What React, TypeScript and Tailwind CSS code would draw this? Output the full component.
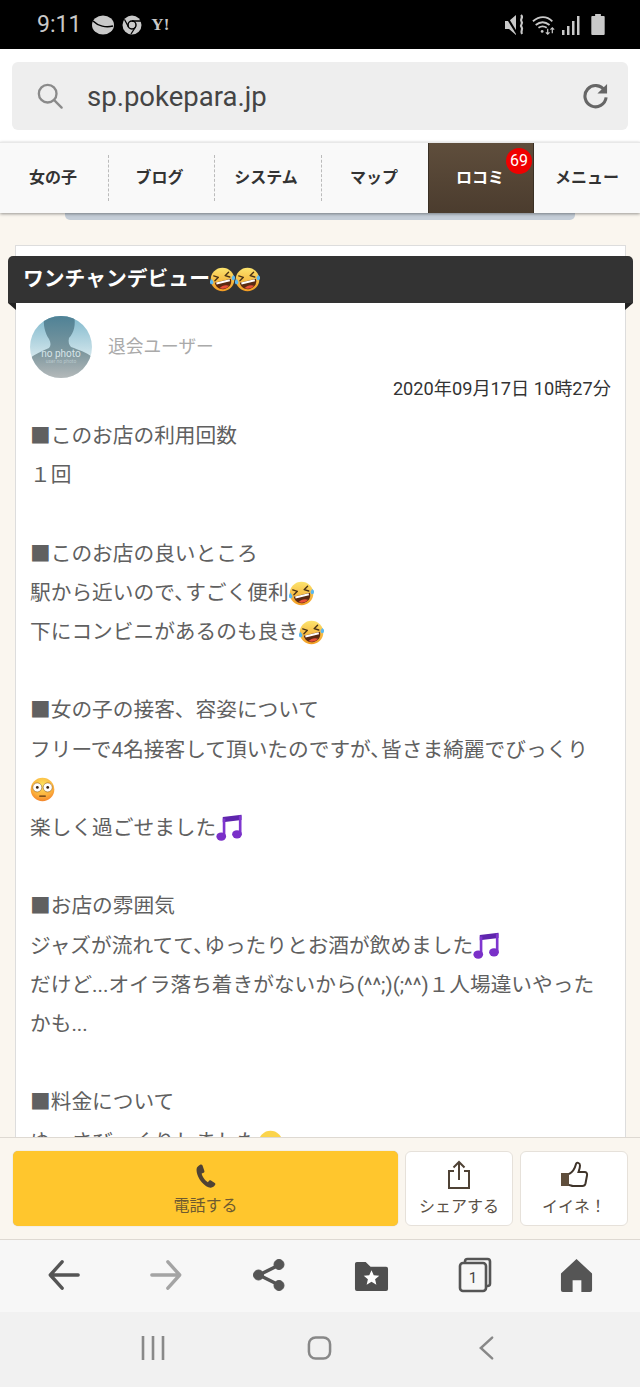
const Rofl = ({ id }: { id: string }) => (
  <svg className="inline-block size-[25px] align-[-6px]" viewBox="0 0 36 36">
    <defs>
      <linearGradient id={id} x1="0" y1="0" x2="0" y2="1">
        <stop offset="0" stopColor="#fce46e" />
        <stop offset="1" stopColor="#f39c22" />
      </linearGradient>
    </defs>
    <circle cx="18" cy="18" r="17" fill={`url(#${id})`} />
    <g transform="rotate(-14 18 18)">
      <path d="M7 10l6 3.500-6 3.500M29 10l-6 3.500 6 3.500" fill="none" stroke="#4a3216" strokeWidth="2" strokeLinecap="round" strokeLinejoin="round" />
      <path d="M6 20h24c0 8-5.500 12-12 12S6 28 6 20z" fill="#5a2a12" />
      <path d="M8 20h20v3H8z" fill="#fff" />
      <path d="M11 29c4-3 10-3 14 0-4 3-10 3-14 0z" fill="#e8503a" />
    </g>
    <path d="M0 20c-.5 3 .5 5 2.500 5s3-2 2-4.500L2 17zM36 14c.5 3-.5 5-2.500 5s-3-2-2-4.500l2-3z" fill="#5cb8f0" />
  </svg>
);

const Flushed = () => (
  <svg className="inline-block size-[25px] align-[-6px]" viewBox="0 0 36 36">
    <defs>
      <radialGradient id="flush" cx="0.5" cy="0.3" r="0.75">
        <stop offset="0" stopColor="#fde25c" />
        <stop offset="0.65" stopColor="#fbae3c" />
        <stop offset="1" stopColor="#f27c28" />
      </radialGradient>
    </defs>
    <circle cx="18" cy="18" r="17" fill="url(#flush)" />
    <circle cx="10.500" cy="15" r="6.500" fill="#fff" stroke="#7a4a14" strokeWidth="0.7" />
    <circle cx="25.500" cy="15" r="6.500" fill="#fff" stroke="#7a4a14" strokeWidth="0.7" />
    <circle cx="10.500" cy="15" r="2" fill="#3a2410" />
    <circle cx="25.500" cy="15" r="2" fill="#3a2410" />
    <path d="M14 27.500h8" stroke="#5a3412" strokeWidth="2" strokeLinecap="round" />
  </svg>
);

const Smile = () => (
  <svg className="inline-block size-[25px] align-[-6px]" viewBox="0 0 36 36">
    <circle cx="18" cy="18" r="17" fill="#fbd44c" />
    <path d="M6 14c2-3 6-3 8 0M22 14c2-3 6-3 8 0" fill="none" stroke="#6b4a14" strokeWidth="2" strokeLinecap="round" />
    <path d="M10 25c4 4 12 4 16 0" fill="none" stroke="#6b4a14" strokeWidth="2" strokeLinecap="round" />
  </svg>
);

const Notes = () => (
  <svg className="inline-block h-[27px] w-[27px] align-[-6px]" viewBox="0 0 36 36">
    <path d="M9 4l25-3v7L9 11z" fill="#5f25ad" />
    <path d="M9 6h3.500v24H9zM30.500 2H34v25h-3.500z" fill="#7f36cf" />
    <ellipse cx="7" cy="30" rx="6.500" ry="5.500" fill="#7a30c8" />
    <ellipse cx="28" cy="27" rx="6.500" ry="5.500" fill="#7a30c8" />
  </svg>
);

const StatusIcons = () => (
  <div className="flex items-center">
    <svg className="h-[22px] w-[20px]" viewBox="0 0 20 22" fill="#c9c9c9">
      <path d="M0 7h4l7-6v20l-7-6H0z" />
      <path d="M0 2l1.500-1.500 11 18L11 20z" fill="#000" />
      <path d="M16 1c3 2.500-1.500 4 .5 6.500s-2 3 0 5.500-1.500 3.500 .5 7" fill="none" stroke="#c9c9c9" strokeWidth="2.200" />
    </svg>
    <svg className="ml-[7px] h-[22px] w-[24px]" viewBox="0 0 26 22" fill="none" stroke="#c9c9c9" strokeWidth="2">
      <path d="M1 7c7-6 15-6 21 0M4 11c5-4 10-4 15 0M7 14c3-2 6-2 9 0" />
      <circle cx="11" cy="18" r="1.500" fill="#c9c9c9" stroke="none" />
      <path d="M17 15v6M22 20v-6M20 16l2-2 2 2M15 19l2 2 2-2" strokeWidth="1.300" />
    </svg>
    <svg className="ml-[6px] h-[20px] w-[18px]" viewBox="0 0 18 20" fill="#c9c9c9">
      <rect x="0" y="15" width="2.500" height="5" />
      <rect x="5" y="11" width="2.500" height="9" />
      <rect x="10" y="6" width="2.500" height="14" />
      <rect x="15" y="1" width="2.500" height="19" />
    </svg>
    <svg className="ml-[11px] h-[21px] w-[14px]" viewBox="0 0 14 22" fill="#c9c9c9">
      <path d="M4 0h6v2h3a1 1 0 0 1 1 1v18a1 1 0 0 1-1 1H1a1 1 0 0 1-1-1V3a1 1 0 0 1 1-1h3z" />
    </svg>
  </div>
);

const tabs = ["女の子", "ブログ", "システム", "マップ", "ロコミ", "メニュー"];

export default function App() {
  return (
    <div className="flex h-[1387px] w-[640px] flex-col overflow-hidden bg-[#faf6ef] font-['Roboto','Noto_Sans_CJK_JP',sans-serif]">
      <div className="flex h-[49px] shrink-0 items-center justify-between bg-black pl-[37px] pr-[35px]">
        <div className="flex items-center">
          <span className="text-[23px] leading-none text-[#c9c9c9]">9:11</span>
          <svg className="ml-[11px] h-[20px] w-[22px]" viewBox="0 0 22 20">
            <ellipse cx="11" cy="10" rx="11" ry="9.500" fill="#c9c9c9" />
            <path d="M1 6c5 5 13 7 20 5" fill="none" stroke="#000" strokeWidth="1.500" />
          </svg>
          <svg className="ml-[8px] h-[20px] w-[20px]" viewBox="0 0 20 20">
            <circle cx="10" cy="10" r="9.500" fill="#c9c9c9" />
            <circle cx="10" cy="10" r="4" fill="#c9c9c9" stroke="#000" strokeWidth="1.500" />
            <path d="M10 6h9M6.500 12L2.500 4.500M13.500 12L9 19" stroke="#000" strokeWidth="1.300" />
          </svg>
          <span className="ml-[9px] font-['Liberation_Serif',serif] text-[17px] font-bold leading-none text-[#c9c9c9]">Y!</span>
        </div>
        <StatusIcons />
      </div>

      <div className="flex h-[93px] shrink-0 items-center bg-white px-[12px]">
        <div className="flex h-[68px] w-full items-center rounded-[6px] bg-[#eeeeee] pl-[25px] pr-[19px]">
          <svg className="size-[26px]" viewBox="0 0 28 28" fill="none" stroke="#8a8a8a" strokeWidth="2.500">
            <circle cx="11.500" cy="11.500" r="9.500" />
            <path d="M18.500 18.500l8 8" strokeLinecap="round" />
          </svg>
          <span className="ml-[24px] flex-1 pt-[3px] text-[27.5px] leading-none text-[#444444]">sp.pokepara.jp</span>
          <svg className="size-[27px]" viewBox="0 0 28 28" fill="none" stroke="#666666" strokeWidth="3.200">
            <path d="M23.500 9A11 11 0 1 0 25 16" />
            <path d="M26 2v10H16z" fill="#666666" stroke="none" />
          </svg>
        </div>
      </div>

      <div className="relative z-10 grid h-[71px] shrink-0 grid-cols-[109px_106px_107px_106px_106px_106px] border-t border-[#e8e8e8] bg-[#f9f9f9] shadow-[0_1px_3px_rgba(0,0,0,0.4)]">
        {tabs.map((tab, i) =>
          tab === "ロコミ" ? (
            <div key={tab} className="relative flex items-center justify-center border-x border-[#3a3025] bg-gradient-to-b from-[#5f4e3c] to-[#4b3c2e] pr-[2px] text-[16px] font-bold text-white">
              {tab}
              <span className="absolute right-[1px] top-[5px] flex size-[26px] items-center justify-center rounded-full bg-[#f00000] text-[16px] font-normal leading-none text-white">69</span>
            </div>
          ) : (
            <div key={tab} className="flex items-center justify-center py-[12px]">
              <div className={`flex h-full w-full items-center justify-center text-[16px] font-bold text-[#333333] ${i === 0 ? "pr-[2px]" : ""} ${i === 1 || i === 2 ? "pr-[4px]" : ""} ${i === 3 ? "pr-[2px]" : ""} ${i < 3 ? "border-r border-dashed border-[#bbbbbb]" : ""}`}>
                {tab}
              </div>
            </div>
          ),
        )}
      </div>

      <div className="min-h-0 flex-1 overflow-hidden">
        <div className="mx-[65px] h-[7px] rounded-b-[5px] bg-[#c5ced8]" />
        <div className="ml-[15px] mr-[14px] mt-[25px] border border-[#dddddd] bg-white">
          <div className="relative z-[1] -mx-[8px] mt-[10px] flex h-[47px] items-center rounded-t-[5px] bg-[#333333] pl-[15px] text-[20.8px] font-bold text-white">
            ワンチャンデビュー<Rofl id="rofl-a" /><Rofl id="rofl-b" />
            <span className="absolute left-0 top-full border-l-[8px] border-t-[7px] border-l-transparent border-t-[#222222]" />
            <span className="absolute right-0 top-full border-r-[8px] border-t-[7px] border-r-transparent border-t-[#222222]" />
          </div>
          <div className="px-[14px]">
            <div className="mt-[13px] flex items-center gap-[16px]">
              <svg className="size-[62px] rounded-full" viewBox="0 0 62 62">
                <defs>
                  <linearGradient id="sky" x1="0" y1="0" x2="0" y2="1">
                    <stop offset="0" stopColor="#7fb8cc" />
                    <stop offset="0.7" stopColor="#d8e9ee" />
                  </linearGradient>
                  <linearGradient id="body" x1="0" y1="0" x2="0" y2="1">
                    <stop offset="0" stopColor="#4f8296" />
                    <stop offset="0.6" stopColor="#7f989f" />
                    <stop offset="1" stopColor="#b4b9ba" />
                  </linearGradient>
                </defs>
                <rect width="62" height="62" fill="url(#sky)" />
                <path d="M14 0h30c2 8 0 17-5 22-1 4 0 7 2 9 8 3 15 5 21 10v21H0V42c5-4 12-7 19-10 2-2 2-5 0-9-4-6-6-14-5-23z" fill="url(#body)" />
                <text x="31" y="41" textAnchor="middle" fontSize="10" fill="#d7e4e8">no photo</text>
                <text x="31" y="47" textAnchor="middle" fontSize="5" fill="#b9c8cd">user no photo</text>
              </svg>
              <span className="text-[17.7px] text-[#aaaaaa]">退会ユーザー</span>
            </div>
            <div className="mt-[-1px] text-right text-[18.2px] leading-[24px] text-[#333333]">2020年09月17日 10時27分</div>
            <div className="mt-[16px] whitespace-nowrap text-[20.7px] leading-[39.2px] text-[#606060]">
              ■このお店の利用回数<br />
              １回<br />
              <br />
              ■このお店の良いところ<br />
              駅から近いので､すごく便利<Rofl id="rofl-c" /><br />
              下にコンビニがあるのも良き<Rofl id="rofl-d" /><br />
              <br />
              ■女の子の接客、容姿について<br />
              フリーで4名接客して頂いたのですが､皆さま綺麗でびっくり<br />
              <Flushed /><br />
              楽しく過ごせました<Notes /><br />
              <br />
              ■お店の雰囲気<br />
              ジャズが流れてて､ゆったりとお酒が飲めました<Notes /><br />
              だけど...オイラ落ち着きがないから(^^;)(;^^)１人場違いやった<br />
              かも...<br />
              <br />
              ■料金について<br />
              ゆーさびっくりしました<Smile />
            </div>
          </div>
        </div>
      </div>

      <div className="flex h-[103px] shrink-0 gap-[7px] border-y border-[#ded9d2] bg-[#faf6ef] pb-[13px] pl-[13px] pr-[12px] pt-[13px]">
        <div className="flex w-[385px] flex-col items-center justify-center rounded-[5px] bg-[#ffc62d] pt-[3px] text-[16px] text-[#6e5a30] shadow-[0_0_1px_rgba(0,0,0,0.3)]">
          <svg className="mb-[5px] size-[26px]" viewBox="0 0 24 24" fill="#4f4235">
            <path d="M6.600 1.500c-1.400.8-3.100 2-3.300 4-.3 4 2 9 5 12.500 2.600 3 5.600 5 8.200 4.800 1.700-.1 3.300-1.400 4-2.700.3-.6.100-1.200-.4-1.600l-3.500-2.400c-.6-.4-1.300-.3-1.700.2l-1.200 1.500c-2.200-1-5.300-5.300-5.700-8l1.800-.9c.6-.3.900-1 .7-1.600L8.800 2.200c-.3-.8-1.400-1.100-2.200-.7z" />
          </svg>
          電話する
        </div>
        <div className="flex w-[108px] flex-col items-center justify-center rounded-[6px] border border-[#e6e1da] bg-white pt-[2px] text-[16px] text-[#5a5046]">
          <svg className="mb-[5px] size-[30px]" viewBox="0 0 30 30" fill="none" stroke="#4f4235" strokeWidth="2">
            <path d="M10 11H5v17h20V11h-5M15 20V2M9.500 7.500L15 2l5.500 5.500" />
          </svg>
          シェアする
        </div>
        <div className="flex w-[108px] flex-col items-center justify-center rounded-[6px] border border-[#e6e1da] bg-white pt-[2px] text-[16px] text-[#5a5046]">
          <svg className="mb-[5px] size-[30px]" viewBox="0 0 30 30" fill="none" stroke="#3f342a" strokeWidth="2">
            <rect x="2" y="13" width="8" height="13" fill="#5f4e3c" stroke="none" />
            <path d="M10 14c4-2 6-6 7-10 .5-2 4-1.500 4 1.500 0 2.500-1 5-1.500 6.500h6c2 0 3 1.500 2.500 3.500l-1.500 8c-.4 1.500-1.500 2.500-3 2.500H14c-1.500 0-2.500-1-4-1" />
          </svg>
          イイネ！
        </div>
      </div>

      <div className="grid h-[72px] shrink-0 grid-cols-6 items-center bg-[#f7f7f7] px-[12px] pb-[2px]">
        <div className="flex justify-center">
          <svg className="ml-[1px] size-[34px]" viewBox="0 0 36 36" fill="none" stroke="#555555" strokeWidth="3.600" strokeLinecap="round" strokeLinejoin="round">
            <path d="M33 18H4M16 4L3.500 18 16 32" />
          </svg>
        </div>
        <div className="flex justify-center">
          <svg className="size-[34px]" viewBox="0 0 36 36" fill="none" stroke="#a4a4a4" strokeWidth="3.600" strokeLinecap="round" strokeLinejoin="round">
            <path d="M3 18h29M20 4l12.500 14L20 32" />
          </svg>
        </div>
        <div className="flex justify-center">
          <svg className="size-[36px]" viewBox="0 0 36 36" fill="#555555" stroke="#555555">
            <path d="M28 8L8 18l20 10" fill="none" strokeWidth="3.500" />
            <circle cx="28" cy="7.500" r="5" />
            <circle cx="7.500" cy="18" r="5" />
            <circle cx="28" cy="28.500" r="5" />
          </svg>
        </div>
        <div className="flex justify-center">
          <svg className="size-[35px]" viewBox="0 0 36 36">
            <path d="M1 6a2 2 0 0 1 2-2h9l5 5h16a2 2 0 0 1 2 2v21a2 2 0 0 1-2 2H3a2 2 0 0 1-2-2z" fill="#4f4f4f" />
            <path d="M18 12.500l2.300 5.200 5.700.5-4.300 3.700 1.300 5.600-5-3-5 3 1.300-5.600L10 18.200l5.700-.5z" fill="#fff" />
          </svg>
        </div>
        <div className="flex justify-center">
          <svg className="ml-[2px] size-[36px]" viewBox="0 0 36 36" fill="none" stroke="#555555" strokeWidth="2.600">
            <path d="M8 6V4.500A2.500 2.500 0 0 1 10.500 2h20A2.500 2.500 0 0 1 33 4.500v22a2.500 2.500 0 0 1-2.500 2.500H29" />
            <rect x="3" y="6" width="26" height="28" rx="3" fill="#f7f7f7" />
            <text x="16" y="26" textAnchor="middle" fontSize="15" fill="#444444" stroke="none" fontFamily="Roboto, sans-serif">1</text>
          </svg>
        </div>
        <div className="flex justify-center">
          <svg className="size-[35px]" viewBox="0 0 36 36" fill="#555555">
            <path d="M18 1l16 15v17a2 2 0 0 1-2 2H23V23H14v12H4a2 2 0 0 1-2-2V16z" />
          </svg>
        </div>
      </div>

      <div className="flex h-[75px] shrink-0 items-center bg-[#f1f1f1] pb-[4px]">
        <div className="flex w-[307px] justify-end pr-[142px]">
          <svg className="h-[24px] w-[24px]" viewBox="0 0 24 24" stroke="#888888" strokeWidth="2.600">
            <path d="M2 0v24M12 0v24M22 0v24" />
          </svg>
        </div>
        <svg className="h-[26px] w-[25px]" viewBox="0 0 26 26" fill="none" stroke="#888888" strokeWidth="2.600">
          <rect x="2" y="2" width="22" height="22" rx="7" />
        </svg>
        <svg className="ml-[146px] h-[28px] w-[17px]" viewBox="0 0 18 26" fill="none" stroke="#888888" strokeWidth="2.600" strokeLinecap="round">
          <path d="M15 2L3 13l12 11" />
        </svg>
      </div>
    </div>
  );
}
